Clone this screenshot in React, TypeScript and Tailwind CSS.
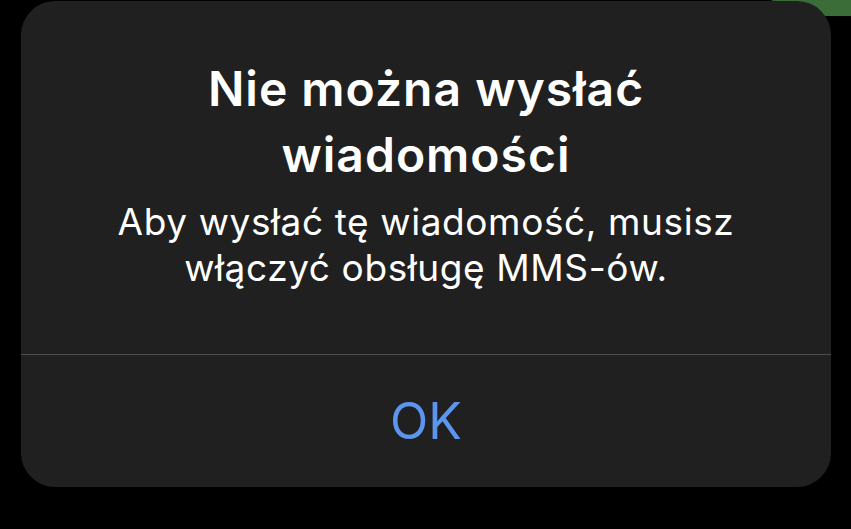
import React from "react";

export default function App() {
  return (
    <div className="relative w-[851px] h-[529px] bg-black overflow-hidden" style={{ fontFamily: "Inter, 'Noto Sans', sans-serif" }}>
      <div className="absolute left-[760px] top-0 w-[91px] h-[16px] bg-[#3b6d39] rounded-tl-[20px]" />
      <div className="relative ml-[21px] pt-[1px] w-[810px]">
        <div className="flex flex-col w-[810px] h-[486px] rounded-[34px] bg-[#202020] overflow-hidden">
          <div className="h-[353px] flex flex-col items-center pt-[55px]">
            <div className="text-white text-center font-semibold text-[48px] leading-[66px] tracking-[1px]">
              <div>Nie można wysłać</div>
              <div>wiadomości</div>
            </div>
            <div className="text-white text-center text-[37px] leading-[46px] tracking-[0.6px] mt-[11px]">
              <div>Aby wysłać tę wiadomość, musisz</div>
              <div>włączyć obsługę MMS-ów.</div>
            </div>
          </div>
          <div className="h-px bg-[#4e4e4e]" />
          <div className="flex-1 flex items-center justify-center">
            <span className="text-[#5b95ee] text-[50px] leading-none">OK</span>
          </div>
        </div>
      </div>
    </div>
  );
}
